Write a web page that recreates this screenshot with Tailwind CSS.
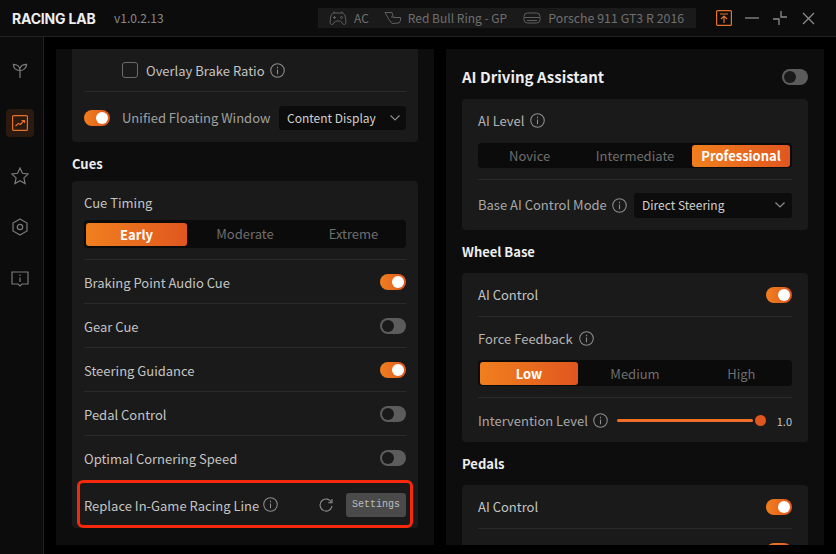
<!DOCTYPE html>
<html lang="en">
<head>
<meta charset="UTF-8">
<title>Racing Lab</title>
<script src="https://cdn.jsdelivr.net/npm/@tailwindcss/browser@4"></script>
</head>
<body class="bg-black">
<div class="w-[836px] h-[554px] overflow-hidden bg-black flex flex-col font-['Noto_Sans_CJK_SC','Noto_Sans',sans-serif] text-[13px] text-[#c4c4c4]">

  <!-- Title bar -->
  <header class="h-[37px] shrink-0 flex items-center bg-[#0c0c0c] border-b border-[#222]">
    <span class="ml-3 w-[102px] font-['Inter',sans-serif] font-bold text-[14px] text-[#eee] tracking-[-0.2px]">RACING LAB</span>
    <span class="text-[12px] text-[#8a8a8a]">v1.0.2.13</span>
    <div class="ml-auto w-[378px] h-[20px] flex items-center bg-[#1a1a1a] text-[#6f6f6f] text-[12px] whitespace-nowrap">
      <svg class="ml-[11px] w-[18px] h-[16px]" viewBox="0 0 18 16" fill="none" stroke="#5f5f5f" stroke-width="1"><path d="M5 3h8c2 0 3 2 3.500 5s1 6-1 6.500-3-3-4-3.500H6.500c-1 .5-2 4-4 3.500S1 11 1.500 8 3 3 5 3z"/><path d="M5 1.500v1.500M13 1.500v1.500M4 7.500h3M5.500 6v3"/><circle cx="12.500" cy="7.500" r="1"/></svg>
      <span class="ml-[7px]">AC</span>
      <svg class="ml-[15px] w-[18px] h-[14px]" viewBox="0 0 18 14" fill="none" stroke="#5f5f5f" stroke-width="1"><path d="M1 1.500h7l1.500 5H16.500v3l-1.500 2.500-7 .5-3-4z"/><path d="M7 6h2"/></svg>
      <span class="ml-[6px]">Red Bull Ring - GP</span>
      <svg class="ml-[16px] w-[18px] h-[12px]" viewBox="0 0 18 12" fill="none" stroke="#5f5f5f" stroke-width="1"><rect x="1" y="1" width="16" height="10" rx="3.500"/><path d="M1.500 5.500h15M4 8.500h10"/></svg>
      <span class="ml-[7px] text-[12.4px]">Porsche 911 GT3 R 2016</span>
    </div>
    <div class="flex items-center ml-[20px] mr-[21px]">
      <svg class="w-[16px] h-[16px]" viewBox="0 0 16 16" fill="none" stroke="#e8702a" stroke-width="1.200"><rect x=".6" y=".6" width="14.800" height="14.800" rx="1"/><path d="M4 4h8M8 13V6.500M5 9l3-3 3 3"/></svg>
      <svg class="ml-[13px] w-[14px] h-[14px]" viewBox="0 0 14 14" fill="none" stroke="#8c8c8c" stroke-width="1.300"><path d="M0 7h14"/></svg>
      <svg class="ml-[14px] w-[14px] h-[14px]" viewBox="0 0 14 14" fill="none" stroke="#8c8c8c" stroke-width="1.300"><path d="M8 0v6h6M6 14V8H0"/></svg>
      <svg class="ml-[15px] w-[13px] h-[13px]" viewBox="0 0 13 13" fill="none" stroke="#8c8c8c" stroke-width="1.300"><path d="M1 1l11 11M12 1L1 12"/></svg>
    </div>
  </header>

  <div class="flex-1 flex min-h-0">
    <!-- Sidebar -->
    <nav class="w-[44px] shrink-0 bg-[#0c0c0c] border-r border-[#222] flex flex-col items-center pr-[3px]">
      <svg class="mt-[25px] w-[16px] h-[17px]" viewBox="0 0 16 18" fill="none" stroke="#7a7a7a" stroke-width="1.300"><path d="M8 17V9C8 5 5 2.500 1 2.500 1 6.500 3.500 9 8 9c3.500 0 7-2.500 7-6.500-3.500 0-6 1.500-7 4"/></svg>
      <div class="mt-[30px] w-[28px] h-[28px] rounded-[4px] bg-[#2a1a10] flex items-center justify-center">
        <svg class="w-[16px] h-[16px]" viewBox="0 0 16 16" fill="none" stroke="#e8702a" stroke-width="1.200"><rect x=".6" y=".6" width="14.800" height="14.800" rx="1"/><path d="M3.500 11l3-2.500 2 1 3.500-4M9.500 5.500H12.500V8"/></svg>
      </div>
      <svg class="mt-[30px] w-[18px] h-[18px]" viewBox="0 0 18 18" fill="none" stroke="#7a7a7a" stroke-width="1.200"><path d="M9 1l2.400 5.300 5.800.7-4.300 3.900 1.200 5.700L9 13.800l-5.100 2.800 1.200-5.700L.8 7l5.800-.7z"/></svg>
      <svg class="mt-[33px] w-[16px] h-[18px]" viewBox="0 0 16 18" fill="none" stroke="#7a7a7a" stroke-width="1.200"><path d="M8 1l7 4v8l-7 4-7-4V5z"/><circle cx="8" cy="9" r="2.700"/></svg>
      <svg class="mt-[35px] w-[18px] h-[16px]" viewBox="0 0 18 16" fill="none" stroke="#7a7a7a" stroke-width="1.200"><path d="M1 1h16v12h-6l-2 2-2-2H1z"/><path d="M9 3.500v1.500M9 6.500v4.500"/></svg>
    </nav>

    <!-- Main -->
    <main class="flex-1 flex gap-3 pl-3 pt-[12px] pb-[9px]">

      <!-- Left panel -->
      <section class="w-[378px] bg-[#0d0d0d] px-4 overflow-hidden">
        <div class="h-[93px] rounded-b-[4px] bg-[#1a1a1a] px-3">
          <div class="h-[43px] flex items-center border-b border-[#2a2a2a] pl-[38px]">
            <span class="w-[16px] h-[16px] rounded-[3px] border border-[#6a6a6a]"></span>
            <span class="ml-2 pt-[2px]">Overlay Brake Ratio</span>
            <svg class="ml-[5px] w-[15px] h-[15px]" viewBox="0 0 14 14" fill="none" stroke="#8c8c8c" stroke-width="1"><circle cx="7" cy="7" r="6.300"/><path d="M7 6v4.500M7 3.500v1.300"/></svg>
          </div>
          <div class="h-[50px] flex items-center pt-[1px]">
            <span class="w-[26px] h-[16px] rounded-full bg-linear-to-r from-[#f07f1e] to-[#e0561f] flex items-center justify-end pr-[2px]"><span class="w-[12px] h-[12px] rounded-full bg-white"></span></span>
            <span class="ml-3 text-[#a0a0a0] whitespace-nowrap">Unified Floating Window</span>
            <div class="ml-auto w-[127px] h-[24px] rounded-[3px] bg-[#0c0c0c] flex items-center justify-between pl-2 pr-[6px] text-[12px] text-[#d0d0d0]">
              Content Display
              <svg class="w-[10px] h-[6px]" viewBox="0 0 10 6" fill="none" stroke="#8c8c8c" stroke-width="1.200"><path d="M.5.500L5 5 9.500.500"/></svg>
            </div>
          </div>
        </div>

        <h2 class="h-[39px] flex items-center pt-[5px] font-bold text-[#eee]">Cues</h2>

        <div class="h-[347px] rounded-[4px] bg-[#1a1a1a] px-3 relative">
          <div class="h-[79px] border-b border-[#2a2a2a] pt-[11px]">
            <div class="leading-[21px]">Cue Timing</div>
            <div class="mt-[7px] h-[28px] rounded-[4px] bg-[#0b0b0b] p-[2px] grid grid-cols-3 items-center text-[#6e6e6e] text-center">
              <span class="w-[101px] h-[23px] leading-[23px] rounded-[3px] bg-linear-to-r from-[#f07f1e] to-[#e0561f] font-bold text-white">Early</span>
              <span>Moderate</span>
              <span class="pl-[5px]">Extreme</span>
            </div>
          </div>
          <div class="h-[44px] flex items-center justify-between border-b border-[#2a2a2a]">
            <span class="pt-[2px]">Braking Point Audio Cue</span>
            <span class="w-[26px] h-[16px] rounded-full bg-linear-to-r from-[#f07f1e] to-[#e0561f] flex items-center justify-end pr-[2px]"><span class="w-[12px] h-[12px] rounded-full bg-white"></span></span>
          </div>
          <div class="h-[44px] flex items-center justify-between border-b border-[#2a2a2a]">
            <span class="pt-[2px]">Gear Cue</span>
            <span class="w-[26px] h-[16px] rounded-full bg-[#5c5c5c] flex items-center pl-[2px]"><span class="w-[12px] h-[12px] rounded-full bg-[#1a1a1a]"></span></span>
          </div>
          <div class="h-[44px] flex items-center justify-between border-b border-[#2a2a2a]">
            <span class="pt-[2px]">Steering Guidance</span>
            <span class="w-[26px] h-[16px] rounded-full bg-linear-to-r from-[#f07f1e] to-[#e0561f] flex items-center justify-end pr-[2px]"><span class="w-[12px] h-[12px] rounded-full bg-white"></span></span>
          </div>
          <div class="h-[44px] flex items-center justify-between border-b border-[#2a2a2a]">
            <span class="pt-[2px]">Pedal Control</span>
            <span class="w-[26px] h-[16px] rounded-full bg-[#5c5c5c] flex items-center pl-[2px]"><span class="w-[12px] h-[12px] rounded-full bg-[#1a1a1a]"></span></span>
          </div>
          <div class="h-[44px] flex items-center justify-between">
            <span class="pt-[2px]">Optimal Cornering Speed</span>
            <span class="w-[26px] h-[16px] rounded-full bg-[#5c5c5c] flex items-center pl-[2px]"><span class="w-[12px] h-[12px] rounded-full bg-[#1a1a1a]"></span></span>
          </div>
          <div class="h-[47px] flex items-center pt-[2px]">
            <span class="pt-[2px]">Replace In-Game Racing Line</span>
            <svg class="ml-[4px] w-[15px] h-[15px]" viewBox="0 0 14 14" fill="none" stroke="#8c8c8c" stroke-width="1"><circle cx="7" cy="7" r="6.300"/><path d="M7 6v4.500M7 3.500v1.300"/></svg>
            <svg class="ml-auto w-[14px] h-[14px]" viewBox="0 0 14 14" fill="none" stroke="#8c8c8c" stroke-width="1.100"><path d="M12.500 4.500A6 6 0 1 0 13 8"/><path d="M13 1v3.800H9.200" /></svg>
            <span class="ml-[13px] w-[60px] h-[24px] rounded-[3px] bg-[#4a4a4a] flex items-center justify-center font-['Liberation_Mono',monospace] text-[10px] text-[#bdbdbd]">Settings</span>
          </div>
          <!-- highlight box over the last row -->
          <div class="absolute left-[5px] bottom-0 w-[336px] h-[48px] rounded-[6px] border-[3px] border-[#f5290c]"></div>
        </div>
      </section>

      <!-- Right panel -->
      <section class="w-[378px] bg-[#0d0d0d] px-4 overflow-hidden">
        <div class="h-[50px] flex items-center justify-between pt-[6px]">
          <h1 class="font-bold text-[15px] text-[#eee]">AI Driving Assistant</h1>
          <span class="w-[26px] h-[16px] rounded-full bg-[#5c5c5c] flex items-center pl-[2px]"><span class="w-[12px] h-[12px] rounded-full bg-[#1a1a1a]"></span></span>
        </div>

        <div class="h-[131px] rounded-[4px] bg-[#1a1a1a] px-4">
          <div class="h-[81px] border-b border-[#2a2a2a] pt-[11px]">
            <div class="flex items-center leading-[21px] text-[#b4b4b4]">AI Level
              <svg class="ml-[6px] w-[15px] h-[15px]" viewBox="0 0 14 14" fill="none" stroke="#8c8c8c" stroke-width="1"><circle cx="7" cy="7" r="6.300"/><path d="M7 6v4.500M7 3.500v1.300"/></svg>
            </div>
            <div class="mt-[12px] h-[25px] rounded-[4px] bg-[#0b0b0b] p-[2px] grid grid-cols-3 items-center text-[#6e6e6e] text-center">
              <span class="pr-[4px]">Novice</span>
              <span>Intermediate</span>
              <span class="w-[98px] h-[22px] leading-[22px] justify-self-end rounded-[3px] bg-linear-to-r from-[#f07f1e] to-[#e0561f] font-bold text-white">Professional</span>
            </div>
          </div>
          <div class="h-[50px] flex items-center">
            <span class="text-[#a8a8a8]">Base AI Control Mode</span>
            <svg class="ml-[5px] w-[15px] h-[15px]" viewBox="0 0 14 14" fill="none" stroke="#8c8c8c" stroke-width="1"><circle cx="7" cy="7" r="6.300"/><path d="M7 6v4.500M7 3.500v1.300"/></svg>
            <div class="ml-auto w-[158px] h-[25px] rounded-[3px] bg-[#0c0c0c] flex items-center justify-between pl-2 pr-[7px] text-[12px] text-[#d0d0d0]">
              Direct Steering
              <svg class="w-[10px] h-[6px]" viewBox="0 0 10 6" fill="none" stroke="#8c8c8c" stroke-width="1.200"><path d="M.5.500L5 5 9.500.500"/></svg>
            </div>
          </div>
        </div>

        <h2 class="h-[43px] flex items-center font-bold text-[#eee]">Wheel Base</h2>

        <div class="h-[169px] rounded-[4px] bg-[#1a1a1a] px-4">
          <div class="h-[44px] flex items-center justify-between border-b border-[#2a2a2a]">
            AI Control
            <span class="w-[26px] h-[16px] rounded-full bg-linear-to-r from-[#f07f1e] to-[#e0561f] flex items-center justify-end pr-[2px]"><span class="w-[12px] h-[12px] rounded-full bg-white"></span></span>
          </div>
          <div class="h-[81px] border-b border-[#2a2a2a] pt-[11px]">
            <div class="flex items-center leading-[21px] text-[#b4b4b4]">Force Feedback
              <svg class="ml-[6px] w-[15px] h-[15px]" viewBox="0 0 14 14" fill="none" stroke="#8c8c8c" stroke-width="1"><circle cx="7" cy="7" r="6.300"/><path d="M7 6v4.500M7 3.500v1.300"/></svg>
            </div>
            <div class="mt-[11px] h-[26px] rounded-[4px] bg-[#0b0b0b] p-[2px] grid grid-cols-3 items-center text-[#6e6e6e] text-center">
              <span class="w-[98px] h-[23px] leading-[23px] rounded-[3px] bg-linear-to-r from-[#f07f1e] to-[#e0561f] font-bold text-white">Low</span>
              <span>Medium</span>
              <span class="pl-[6px]">High</span>
            </div>
          </div>
          <div class="h-[44px] flex items-center">
            <span class="pt-[2px] text-[#a8a8a8]">Intervention Level</span>
            <svg class="ml-[5px] w-[15px] h-[15px]" viewBox="0 0 14 14" fill="none" stroke="#8c8c8c" stroke-width="1"><circle cx="7" cy="7" r="6.300"/><path d="M7 6v4.500M7 3.500v1.300"/></svg>
            <span class="ml-[9px] w-[136px] h-[3px] rounded-full bg-[#f0702a]"></span>
            <span class="ml-[2px] w-[11px] h-[11px] rounded-full bg-[#e0561f]"></span>
            <span class="ml-auto pt-[2px] text-[11px] text-[#c4c4c4]">1.0</span>
          </div>
        </div>

        <h2 class="h-[43px] flex items-center font-bold text-[#eee]">Pedals</h2>

        <div class="h-[80px] rounded-t-[4px] bg-[#1a1a1a] px-4">
          <div class="h-[44px] flex items-center justify-between border-b border-[#2a2a2a]">
            AI Control
            <span class="w-[26px] h-[16px] rounded-full bg-linear-to-r from-[#f07f1e] to-[#e0561f] flex items-center justify-end pr-[2px]"><span class="w-[12px] h-[12px] rounded-full bg-white"></span></span>
          </div>
          <div class="h-[44px] flex items-center justify-end">
            <span class="w-[26px] h-[16px] rounded-full bg-linear-to-r from-[#f07f1e] to-[#e0561f] flex items-center justify-end pr-[2px]"><span class="w-[12px] h-[12px] rounded-full bg-white"></span></span>
          </div>
        </div>
      </section>
    </main>
  </div>
</div>
</body>
</html>
